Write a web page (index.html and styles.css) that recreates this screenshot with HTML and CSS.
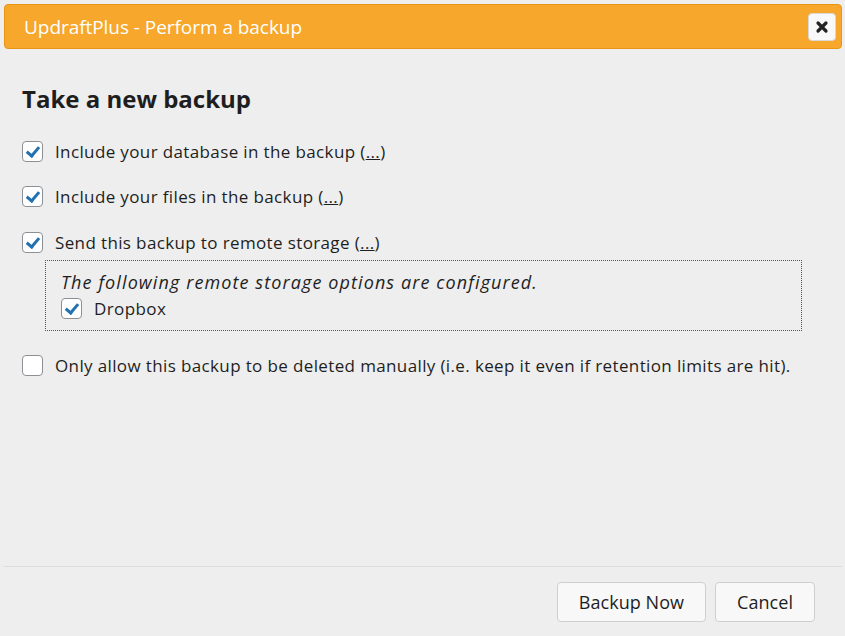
FILE: index.html
```html
<!DOCTYPE html>
<html>
<head>
<meta charset="utf-8">
<link rel="stylesheet" href="styles.css">
</head>
<body>
<div class="dialog">
  <div class="titlebar">
    <span class="title">UpdraftPlus - Perform a backup</span>
    <button class="close" aria-label="Close">
      <svg width="14" height="14" viewBox="0 0 14 14"><path d="M3 3 L11 11 M11 3 L3 11" stroke="#222" stroke-width="3.2" stroke-linecap="round"/></svg>
    </button>
  </div>
  <div class="content">
    <h2 class="heading">Take a new backup</h2>
    <label class="row"><span class="cb checked"></span>Include your database in the backup (<a class="more">...</a>)</label>
    <label class="row"><span class="cb checked"></span>Include your files in the backup (<a class="more">...</a>)</label>
    <label class="row"><span class="cb checked"></span>Send this backup to remote storage (<a class="more">...</a>)</label>
    <div class="remote">
      <div class="remote-note">The following remote storage options are configured.</div>
      <label class="subrow"><span class="cb checked"></span>Dropbox</label>
    </div>
    <label class="row last"><span class="cb"></span>Only allow this backup to be deleted manually (i.e. keep it even if retention limits are hit).</label>
  </div>
  <div class="footer">
    <button class="btn">Backup Now</button>
    <button class="btn">Cancel</button>
  </div>
</div>
</body>
</html>
```
FILE: styles.css
```css
html, body { margin: 0; padding: 0; }
body {
  background: #eeeeee;
  font-family: "Open Sans", "DejaVu Sans", sans-serif;
  color: #1e1e1e;
  width: 845px;
  height: 636px;
  overflow: hidden;
}
.dialog {
  display: flex;
  flex-direction: column;
  height: 636px;
  box-sizing: border-box;
  padding: 4px 3px 0 4px;
}
.titlebar {
  height: 45px;
  box-sizing: border-box;
  background: #f7a72b;
  border: 1px solid #e89515;
  border-radius: 4px;
  display: flex;
  align-items: center;
  justify-content: space-between;
  padding: 0 5px 0 19px;
}
.title {
  color: #fff;
  font-size: 19px;
  letter-spacing: -0.05px;
}
.close {
  width: 28px;
  height: 28px;
  box-sizing: border-box;
  border: 1px solid #d8d8d8;
  border-radius: 4px;
  background: #f8f8f8;
  display: flex;
  align-items: center;
  justify-content: center;
  padding: 0;
}
.content {
  flex: 1;
  padding: 0 18px;
}
.heading {
  margin: 33px 0 25px;
  font-size: 24px;
  font-weight: 700;
  color: #1e1e1e;
}
.row {
  display: flex;
  align-items: center;
  font-size: 17px;
  letter-spacing: 0.37px;
  height: 22px;
  margin-bottom: 23.5px;
}
.row .cb { margin-right: 12px; }
.more { text-decoration: underline; color: #1e1e1e; }
.cb {
  width: 21px;
  height: 21px;
  box-sizing: border-box;
  border: 1px solid #8c8f94;
  border-radius: 4px;
  background: #fff;
  flex: none;
  display: inline-block;
  position: relative;
}
.cb.checked::after {
  content: "";
  position: absolute;
  left: 6px;
  top: 2px;
  width: 5px;
  height: 10px;
  border: solid #2271b1;
  border-width: 0 3px 3px 0;
  transform: rotate(40deg);
}
.remote {
  margin: -16.5px 22px 23.5px 23px;
  border: 1px dotted #555;
  padding: 10px 15px 10px;
}
.remote-note {
  font-style: italic;
  font-size: 18px;
  letter-spacing: 1.1px;
  line-height: 22px;
}
.subrow {
  display: flex;
  align-items: center;
  font-size: 17px;
  letter-spacing: 0.4px;
  margin-top: 4px;
}
.subrow .cb { margin-right: 12px; }
.footer {
  border-top: 1px solid #dcdcdc;
  height: 70px;
  box-sizing: border-box;
  display: flex;
  justify-content: flex-end;
  align-items: flex-start;
  padding: 15px 27px 0 0;
  gap: 9px;
}
.btn {
  font-family: inherit;
  font-size: 18px;
  letter-spacing: 0.05px;
  height: 40px;
  padding: 0 21px;
  border: 1px solid #cfcfcf;
  border-radius: 4px;
  background: #f8f8f8;
  color: #1e1e1e;
}
```
